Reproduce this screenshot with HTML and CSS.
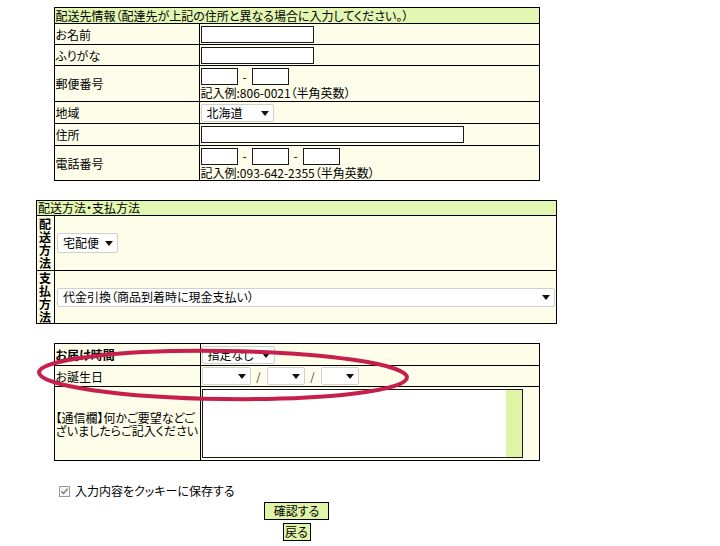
FILE: index.html
```html
<!DOCTYPE html>
<html lang="ja">
<head>
<meta charset="utf-8">
<title>配送先情報</title>
<link rel="stylesheet" href="styles.css">
</head>
<body>
<div class="page">
  <table class="form t1">
    <colgroup><col class="c-label"><col class="c-value"></colgroup>
    <tr class="h16"><th colspan="2" class="head">配送先情報（配達先が上記の住所と異なる場合に入力してください。）</th></tr>
    <tr class="h21"><td class="label">お名前</td><td class="value"><input class="txt w113" type="text"></td></tr>
    <tr class="h21"><td class="label">ふりがな</td><td class="value"><input class="txt w113" type="text"></td></tr>
    <tr class="h36"><td class="label">郵便番号</td><td class="value">
      <div class="boxes"><input class="txt w37" type="text"><span class="dash">-</span><input class="txt w37" type="text"></div>
      <div class="note">記入例:806-0021（半角英数）</div>
    </td></tr>
    <tr class="h22"><td class="label">地域</td><td class="value"><span class="sel w73"><select><option>北海道</option></select></span></td></tr>
    <tr class="h22"><td class="label">住所</td><td class="value"><input class="txt w263" type="text"></td></tr>
    <tr class="h35"><td class="label">電話番号</td><td class="value">
      <div class="boxes"><input class="txt w37" type="text"><span class="dash">-</span><input class="txt w37" type="text"><span class="dash">-</span><input class="txt w37" type="text"></div>
      <div class="note">記入例:093-642-2355（半角英数）</div>
    </td></tr>
  </table>

  <table class="form t2">
    <colgroup><col class="c-v"><col class="c-rest"></colgroup>
    <tr class="h15"><th colspan="2" class="head">配送方法・支払方法</th></tr>
    <tr class="h55"><td class="vlabel">配送方法</td><td class="value2"><span class="sel w61 tall"><select><option>宅配便</option></select></span></td></tr>
    <tr class="h53"><td class="vlabel">支払方法</td><td class="value2"><span class="sel wfull"><select><option>代金引換（商品到着時に現金支払い）</option></select></span></td></tr>
  </table>

  <table class="form t3">
    <colgroup><col class="c-label3"><col class="c-value"></colgroup>
    <tr class="h22"><td class="label bold">お届け時間</td><td class="value"><span class="sel w73"><select><option>指定なし</option></select></span></td></tr>
    <tr class="h21"><td class="label">お誕生日</td><td class="value">
      <div class="dates"><span class="sel w48"><select><option></option></select></span><span class="slash">/</span><span class="sel w38"><select><option></option></select></span><span class="slash">/</span><span class="sel w38"><select><option></option></select></span></div>
    </td></tr>
    <tr class="h74"><td class="label">【通信欄】何かご要望などございましたらご記入ください</td><td class="value"><textarea class="memo"></textarea></td></tr>
  </table>

  <label class="save">
    <svg class="chk" width="11" height="11" viewBox="0 0 11 11"><rect x="0.5" y="0.5" width="10" height="10" fill="#f4f4f4" stroke="#9a9a9a"/><path d="M2.5 5.2 L4.5 7.4 L8.6 2.8" fill="none" stroke="#7a7a7a" stroke-width="1.4"/></svg>
    <span>入力内容をクッキーに保存する</span>
  </label>
  <button class="btn b1" type="button">確認する</button>
  <button class="btn b2" type="button">戻る</button>

  <svg class="mark" width="400" height="72" viewBox="0 0 400 72"><ellipse cx="193" cy="36" rx="184" ry="24" fill="none" stroke="#c61f4c" stroke-width="4" transform="rotate(0.8 193 36)"/></svg>
</div>
</body>
</html>
```

FILE: styles.css
```css
* { box-sizing: border-box; }
html, body { margin: 0; padding: 0; background: #fff; }
body {
  font-family: "Noto Sans CJK JP", "Noto Sans", sans-serif;
  font-size: 12px;
  line-height: 14px;
  color: #000;
  font-feature-settings: "palt";
}
.page {
  position: relative;
  width: 593px;
  display: flex;
  flex-direction: column;
  align-items: center;
  padding-top: 7px;
}
table.form {
  border-collapse: collapse;
  table-layout: fixed;
  background: #fdfdea;
}
table.form td, table.form th {
  border: 1px solid #000;
  padding: 0 1px;
  vertical-align: middle;
  text-align: left;
  font-weight: normal;
  white-space: normal;
}
th.head { background: #e3f6b2; line-height: 14px; }
.t1 { width: 486px; }
.t3 { width: 486px; margin-top: 19px; }
.t2 { width: 521px; margin-top: 19px; }
.c-label { width: 145px; }
.c-label3 { width: 146px; }
.c-v { width: 18px; }
.h15 { height: 15px; }
.h16 { height: 16px; }
.h21 { height: 21px; }
.h22 { height: 22px; }
.h35 { height: 35px; }
.h36 { height: 36px; }
.h53 { height: 53px; }
.h55 { height: 55px; }
.h74 { height: 74px; }
.bold { font-weight: bold !important; }
.label { line-height: 13px; }
.vlabel { font-weight: bold !important; line-height: 13px; padding: 0 1px 0 2px !important; word-break: break-all; }
.value2 { padding: 0 1px 0 2px !important; }

.txt {
  display: block;
  height: 17px;
  border: 1px solid #1a1a1a;
  background: #fff;
  padding: 0 2px;
  font: inherit;
  margin: 0;
}
.w113 { width: 113px; }
.w263 { width: 263px; }
.w37 { width: 37px; }
.boxes { display: flex; align-items: center; gap: 0; }
.dash { width: 14px; text-align: center; line-height: 14px; }
.note { line-height: 13px; margin-top: 1px; }

.sel { position: relative; display: inline-block; vertical-align: middle; }
.sel select {
  -webkit-appearance: none;
  appearance: none;
  width: 100%;
  height: 18px;
  border: 1px solid #cfcfcf;
  border-radius: 2px;
  background: #fff;
  font: inherit;
  color: #000;
  padding: 0 0 0 5px;
  margin: 0;
  display: block;
}
.sel::after {
  content: "";
  position: absolute;
  right: 5px;
  top: 7px;
  border-left: 4px solid transparent;
  border-right: 4px solid transparent;
  border-top: 5px solid #111;
}
.sel.tall select { height: 20px; }
.sel.tall::after { top: 8px; }
.w73 { width: 73px; }
.w61 { width: 61px; }
.w48 { width: 49px; }
.w38 { width: 38px; }
.wfull { width: 498px; display: block; }
.wfull select { height: 19px; }
.dates { display: flex; align-items: center; }
.slash { width: 16px; text-align: center; font-size: 11px; color: #333; }

.memo {
  display: block;
  width: 321px;
  height: 69px;
  margin: 0;
  border: 1px solid #1a1a1a;
  resize: none;
  font: inherit;
  background: linear-gradient(to right, #fff 303px, #e0f4a6 303px);
}

.save {
  align-self: flex-start;
  margin: 23px 0 0 59px;
  display: flex;
  align-items: center;
  gap: 5px;
  height: 14px;
}
.chk { display: block; }
.btn {
  font: inherit;
  font-feature-settings: "palt";
  color: #000;
  background: #e0f4a8;
  border: 1px solid #000;
  border-radius: 0;
  height: 18px;
  line-height: 16px;
  padding: 0;
  margin: 0;
}
.b1 { width: 65px; margin-top: 4px; }
.b2 { width: 28px; margin-top: 3px; }

.mark { position: absolute; left: 30px; top: 339px; pointer-events: none; }
```
